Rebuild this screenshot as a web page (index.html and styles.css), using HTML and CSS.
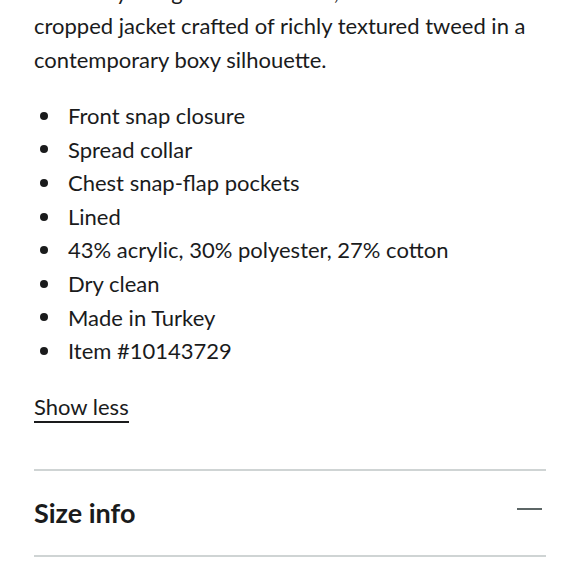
FILE: index.html
```html
<!DOCTYPE html>
<html lang="en">
<head>
<meta charset="utf-8">
<link rel="stylesheet" href="styles.css">
</head>
<body>
<main class="details">
  <p class="desc">Modernly designed and crafted, this is a classic<br>cropped jacket crafted of richly textured tweed in a<br>contemporary boxy silhouette.</p>
  <ul class="features">
    <li>Front snap closure</li>
    <li>Spread collar</li>
    <li>Chest snap-flap pockets</li>
    <li>Lined</li>
    <li>43% acrylic, 30% polyester, 27% cotton</li>
    <li>Dry clean</li>
    <li>Made in Turkey</li>
    <li>Item #10143729</li>
  </ul>
  <a class="toggle" href="#">Show less</a>
  <section class="accordion">
    <h2 class="acc-title">Size info</h2>
    <span class="acc-icon" aria-hidden="true"></span>
  </section>
</main>
</body>
</html>
```
FILE: styles.css
```css
html, body {
  margin: 0;
  padding: 0;
  background: #fff;
}
body {
  font-family: Lato, "Noto Sans", sans-serif;
  color: #1a1b1c;
  overflow: hidden;
}
.details {
  width: 512px;
  padding: 0 34px;
  margin-top: -25px;
}
.desc {
  margin: 0;
  font-size: 22px;
  line-height: 34px;
  white-space: nowrap;
}
.features {
  list-style: none;
  margin: 22px 0 0;
  padding: 0;
  font-size: 22px;
  line-height: 33.6px;
}
.features li {
  display: flex;
  align-items: center;
}
.features li::before {
  content: "";
  width: 8px;
  height: 8px;
  border-radius: 50%;
  background: #1a1b1c;
  margin: 0 20px 0 6px;
  flex: none;
}
.toggle {
  display: inline-block;
  margin-top: 25px;
  font-size: 22px;
  line-height: 28px;
  color: #1a1b1c;
  text-decoration: none;
  border-bottom: 2px solid #1a1b1c;
}
.accordion {
  margin-top: 46px;
  border-top: 2px solid #cfd4d4;
  border-bottom: 2px solid #cfd4d4;
  height: 84px;
  display: flex;
  align-items: center;
  justify-content: space-between;
}
.acc-title {
  margin: 0;
  font-size: 27px;
  font-weight: 700;
}
.acc-icon {
  width: 25px;
  height: 2px;
  background: #5c6666;
  margin-right: 4px;
  margin-bottom: 8px;
}
```
